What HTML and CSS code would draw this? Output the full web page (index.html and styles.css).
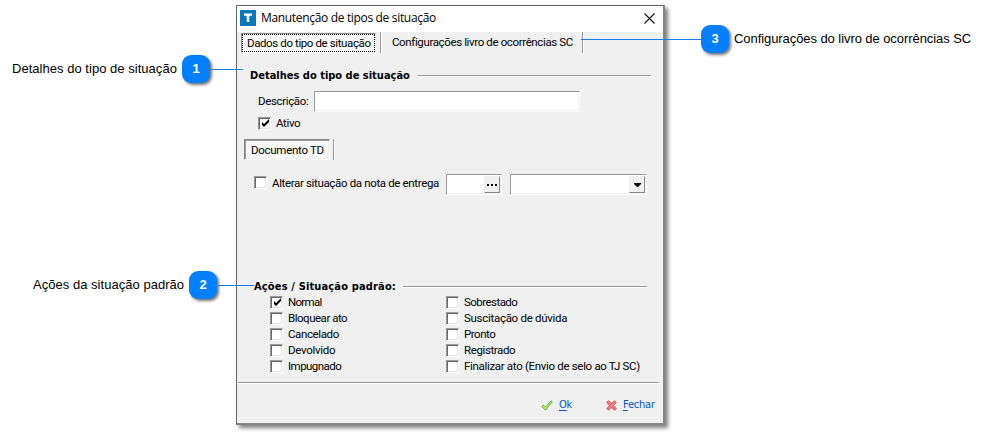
FILE: index.html
```html
<!DOCTYPE html>
<html lang="pt-BR">
<head>
<meta charset="utf-8">
<title>Manutenção de tipos de situação</title>
<link rel="stylesheet" href="styles.css">
</head>
<body>
<main class="page">
  <aside class="side left">
    <div class="callout first"><span class="note n1">Detalhes do tipo de situação</span><b class="badge">1<i class="lead l1"></i></b></div>
    <div class="callout second"><span class="note n2">Ações da situação padrão</span><b class="badge">2<i class="lead l2"></i></b></div>
  </aside>
  <section class="dialog">
    <header class="titlebar">
      <svg class="logo" width="16" height="16" viewBox="0 0 16 16"><path fill="#0878b8" d="M0 0h16v16H0z"/><path fill="#fff" d="M4 3.5h8v2.3H9.3V12H6.7V5.8H4z"/></svg>
      <h1>Manutenção de tipos de situação</h1>
      <svg class="close" width="11" height="11" viewBox="0 0 11 11"><path d="M.5.5l10 10M10.5.5l-10 10" stroke="#111" stroke-width="1.1"/></svg>
    </header>
    <nav class="tabs">
      <span class="tab active"><span class="t-dados">Dados do tipo de situação</span></span>
      <span class="sep"></span>
      <span class="tab plain"><span class="t-config">Configurações livro de ocorrências SC</span></span>
      <span class="sep"></span>
    </nav>
    <div class="group g1"><h2 class="h-det">Detalhes do tipo de situação</h2><span class="rule"></span></div>
    <div class="row desc"><span class="t-desc">Descrição:</span><span class="field"></span></div>
    <div class="row ativo"><span class="box"><svg width="9" height="9" viewBox="0 0 9 9"><path d="M1 3v3l2 2 5-5V0L3 5z"/></svg></span><span class="t-ativo">Ativo</span></div>
    <div class="row doc"><span class="tab docs"><span class="t-doc">Documento TD</span></span><span class="sep"></span></div>
    <div class="row alter"><span class="box"></span><span class="t-alter">Alterar situação da nota de entrega</span>
      <span class="field code"><span class="btn"><svg width="10" height="2"><path d="M0 0h2v2H0zM4 0h2v2H4zM8 0h2v2H8z"/></svg></span></span>
      <span class="field combo"><span class="btn"><svg width="7" height="4"><path d="M0 0h7v1L4 4H3L0 1z"/></svg></span></span>
    </div>
    <div class="group g2"><h2 class="h-ac">Ações / Situação padrão:</h2><span class="rule"></span></div>
    <div class="checks">
      <div class="check"><span class="box"><svg width="9" height="9" viewBox="0 0 9 9"><path d="M1 3v3l2 2 5-5V0L3 5z"/></svg></span><span class="c1">Normal</span></div>
      <div class="check"><span class="box"></span><span class="c2">Sobrestado</span></div>
      <div class="check"><span class="box"></span><span class="c3">Bloquear ato</span></div>
      <div class="check"><span class="box"></span><span class="c4">Suscitação de dúvida</span></div>
      <div class="check"><span class="box"></span><span class="c5">Cancelado</span></div>
      <div class="check"><span class="box"></span><span class="c6">Pronto</span></div>
      <div class="check"><span class="box"></span><span class="c7">Devolvido</span></div>
      <div class="check"><span class="box"></span><span class="c8">Registrado</span></div>
      <div class="check"><span class="box"></span><span class="c9">Impugnado</span></div>
      <div class="check"><span class="box"></span><span class="c10">Finalizar ato (Envio de selo ao TJ SC)</span></div>
    </div>
    <footer class="actions">
      <svg width="12" height="11" viewBox="0 0 12 11"><path d="M.7 6.5L2.3 5l2 2L10 .8l1.4 1.1L4.5 10.2z" fill="#b5e878" stroke="#75b63e"/></svg>
      <span class="link ok"><u>O</u>k</span>
      <svg width="11" height="11" viewBox="0 0 11 11"><path d="M.8 2.4L2.4.8l3.1 2.7L8.6.8l1.6 1.6-2.7 3.1 2.7 3.1-1.6 1.6-3.1-2.7-3.1 2.7L.8 8.6l2.7-3.1z" fill="#f08080" stroke="#d34f55"/></svg>
      <span class="link fechar"><u>F</u>echar</span>
    </footer>
  </section>
  <aside class="side right">
    <div class="callout third"><b class="badge">3<i class="lead l3"></i></b><span class="note n3">Configurações do livro de ocorrências SC</span></div>
  </aside>
</main>
</body>
</html>
```
FILE: styles.css
```css
* { box-sizing: border-box; }
body { margin: 0; background: #fff; color: #000; font: 12px/16px "Liberation Sans", Arial, sans-serif; white-space: nowrap; overflow: hidden; }
.page { display: flex; width: 987px; height: 434px; }
svg { display: block; flex: none; }
h1, h2 { margin: 0; }
.left { width: 236px; display: flex; flex-direction: column; }
.right { flex: 1; }
.callout { display: flex; align-items: center; height: 28px; }
.first { margin-top: 55px; padding-left: 12px; }
.second { margin-top: 188px; padding-left: 33px; }
.third { margin-top: 25px; padding-left: 36px; }
.note { font-size: 13px; width: 165px; }
.n1, .n2 { letter-spacing: .03px; }
.n2 { width: 151px; }
.n3 { margin-left: 5px; letter-spacing: -.07px; }
.badge { position: relative; width: 28px; height: 28px; margin-left: 5px; border-radius: 9px; background: #0080ff; color: #fff; text-align: center; font-size: 13px; line-height: 28px; box-shadow: 2px 2px 3px rgba(0,0,0,.55); flex: none; }
.third .badge { margin-left: 0; }
.lead { position: absolute; height: 1px; background: #1480e8; z-index: 3; top: 14px; left: 28px; }
.l1 { width: 33px; }
.l2 { width: 37px; }
.l3 { left: -120px; width: 120px; }
.dialog { font-family: Roboto, "Liberation Sans", sans-serif; font-size: 11.5px; letter-spacing: -.35px; width: 429px; height: 420px; margin-top: 5px; flex: none; background: #f0f0f0; border: 1px solid #666; border-right: 2px solid #858585; border-bottom: 2px solid #858585; box-shadow: 3px 3px 4px rgba(0,0,0,.5); }
.titlebar { height: 26px; background: #fff; display: flex; align-items: center; padding: 0 8px 2px 3px; }
h1 { font: 12px/18px "Open Sans", sans-serif; margin-left: 5px; letter-spacing: -.33px; }
.close { margin-left: auto; }
.tabs { display: flex; height: 21px; padding-left: 4px; }
.tab { display: flex; align-items: center; }
.active, .docs { border: 1px solid; border-color: #858585 #fff #fff #858585; background: #f8f8f8; }
.active { width: 135px; height: 20px; margin-top: 1px; padding-left: 5px; outline: 1px dotted #000; outline-offset: -2px; }
.sep { width: 2px; background: #999; border-right: 1px solid #fff; margin-left: 4px; }
.plain { width: 201px; padding-left: 11px; margin-left: -1px; margin-top: -1px; }
.tabs .sep:last-child { margin-left: 0; }
.t-dados { letter-spacing: -.39px; }
.t-config { letter-spacing: -.37px; }
.group { display: flex; align-items: center; height: 16px; }
h2 { font: bold 11px/16px "DejaVu Sans Condensed", "DejaVu Sans", sans-serif; letter-spacing: 0; }
.h-ac { width: 149px; letter-spacing: .15px; }
.rule { flex: 1; height: 2px; background: #999; border-bottom: 1px solid #fff; }
.g1 { margin: 15px 12px 0 13px; }
.h-det { width: 168px; }
.row { display: flex; align-items: center; }
.desc { margin-top: 7px; height: 21px; padding-left: 21px; }
.t-desc { width: 56px; margin-top: -1px; }
.field { height: 21px; width: 266px; background: #fff; border: 1px solid; border-color: #999 #fff #fff #999; box-shadow: inset -1px -1px #eee; display: flex; justify-content: flex-end; padding: 1px; }
.ativo { height: 13px; margin-top: 5px; padding-left: 21px; }
.box { width: 13px; height: 13px; flex: none; background: #fff; border: 1px solid; border-color: #999 #fff #fff #999; box-shadow: inset 1px 1px #666, inset -1px -1px #e5e5e5; padding: 1px; }
.box svg { margin-left: 1px; }
.box + span { margin-left: 5px; }
.t-ativo { margin-top: -1px; }
.doc { height: 21px; margin-top: 9px; padding-left: 7px; }
.docs { width: 86px; height: 21px; padding-left: 6px; box-shadow: inset 1px 1px #999, inset -1px -1px #eee; }
.t-doc { letter-spacing: -.28px; }
.doc .sep { height: 21px; margin-left: 3px; }
.alter { height: 21px; margin-top: 14px; padding-left: 17px; }
.alter .box { margin-top: -5px; }
.t-alter { width: 174px; margin-top: -4px; }
.code { width: 56px; }
.combo { width: 137px; margin-left: 8px; }
.btn { width: 16px; height: 17px; display: flex; align-items: center; justify-content: center; background: #f0f0f0; border: 1px solid; border-color: #f0f0f0 #888 #888 #f0f0f0; }
.g2 { margin: 84px 16px 0 17px; }
.checks { display: grid; grid-template-columns: 176px 1fr; grid-auto-rows: 16px; padding-left: 33px; margin-top: -1px; }
.check { display: flex; align-items: center; }
.c1 { letter-spacing: -.7px; }
.c2, .c9 { letter-spacing: -.54px; }
.c3, .c6 { letter-spacing: -.48px; }
.c5, .c8 { letter-spacing: -.39px; }
.c4, .c7 { letter-spacing: -.29px; }
.c10 { letter-spacing: -.32px; }
.actions { margin: 8px 4px 0 1px; border-top: 1px solid #999; box-shadow: inset 0 1px #fff; height: 40px; padding: 5px 0 0 303px; display: flex; align-items: center; }
.link { color: #0055c0; margin-left: 6px; font: 11px/16px "DejaVu Sans Condensed", "DejaVu Sans", sans-serif; letter-spacing: -.2px; }
.link u { text-underline-offset: 2px; }
.ok { width: 47px; }
```
